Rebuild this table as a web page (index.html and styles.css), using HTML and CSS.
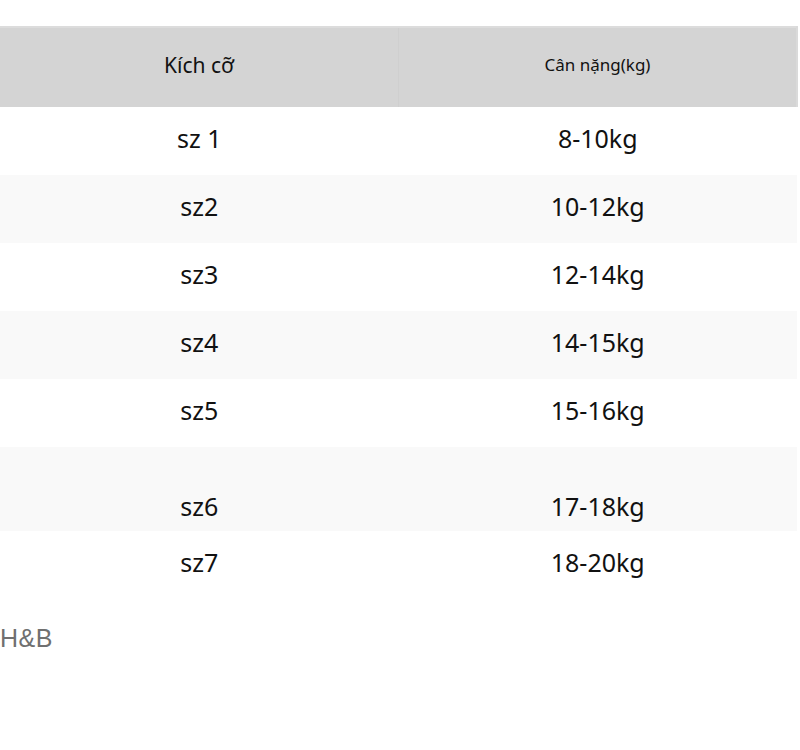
FILE: index.html
```html
<!DOCTYPE html>
<html lang="vi">
<head>
<meta charset="utf-8">
<link rel="stylesheet" href="styles.css">
</head>
<body>
<div class="page">
  <table class="size-table">
    <thead>
      <tr>
        <th class="h-size">Kích cỡ</th>
        <th class="h-weight">Cân nặng(kg)</th>
      </tr>
    </thead>
    <tbody>
      <tr><td>sz 1</td><td>8-10kg</td></tr>
      <tr class="alt"><td>sz2</td><td>10-12kg</td></tr>
      <tr><td>sz3</td><td>12-14kg</td></tr>
      <tr class="alt"><td>sz4</td><td>14-15kg</td></tr>
      <tr><td>sz5</td><td>15-16kg</td></tr>
      <tr class="alt tall"><td>sz6</td><td>17-18kg</td></tr>
      <tr><td>sz7</td><td>18-20kg</td></tr>
    </tbody>
  </table>
  <p class="brand">H&amp;B</p>
</div>
</body>
</html>
```

FILE: styles.css
```css
html, body {
  margin: 0;
  padding: 0;
  background: #ffffff;
}

.page {
  padding-top: 26px;
  font-family: "Noto Sans", "Open Sans", sans-serif;
  color: #111111;
}

.size-table {
  width: 798px;
  border-collapse: collapse;
  table-layout: fixed;
}

.size-table th {
  background: #d4d4d4;
  height: 80px;
  padding: 0 0 6px;
  box-sizing: border-box;
  font-weight: 400;
  text-align: center;
  vertical-align: middle;
  border-right: 1px solid #cfcfcf;
  border-top: 2px solid #dcdcdc;
}

.size-table th:last-child {
  border-right: 2px solid #dadada;
}

.h-size {
  font-size: 21px;
}

.h-weight {
  font-size: 17px;
}

.size-table td {
  padding: 13px 0 19px;
  line-height: 36px;
  font-size: 25px;
  text-align: center;
}

.size-table tr.alt td {
  background: #f9f9f9;
}

.size-table tr.tall td {
  padding-top: 41px;
  padding-bottom: 7px;
}

.brand {
  margin: 25px 0 0;
  font-family: "Liberation Sans", Arial, sans-serif;
  font-size: 25px;
  letter-spacing: 0.5px;
  color: #707070;
}
```
